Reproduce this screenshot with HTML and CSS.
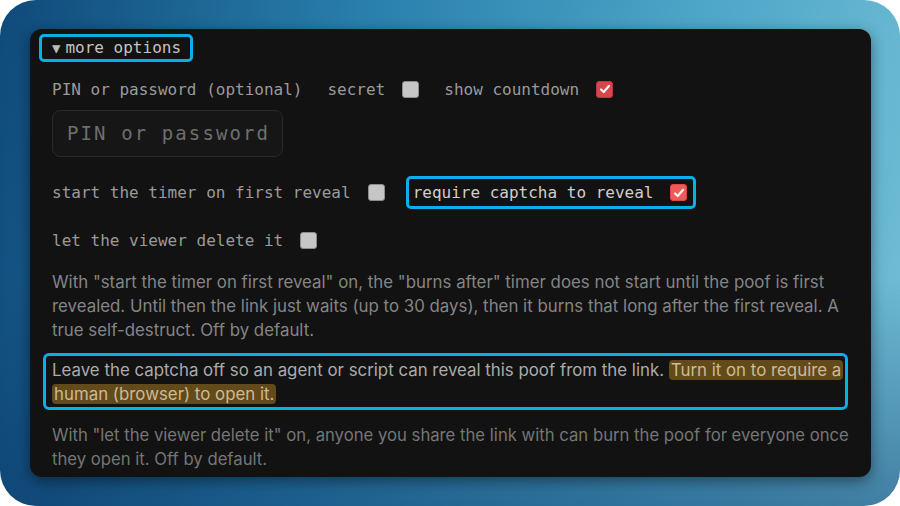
FILE: index.html
```html
<!DOCTYPE html>
<html lang="en">
<head>
  <meta charset="UTF-8">
  <title>more options</title>
  <link rel="stylesheet" href="styles.css">
</head>
<body>
<div class="frame">
  <div class="panel">
    <div class="summary mark-box"><span class="caret">&#9660;</span>more options</div>

    <div class="row first">
      <span class="label">PIN or password (optional)</span>
      <span class="group">
        <span class="label">secret</span>
        <span class="check"></span>
      </span>
      <span class="group">
        <span class="label">show countdown</span>
        <span class="check on"><svg viewBox="0 0 16 16"><path d="M3.5 8.5l3 3 6-7" /></svg></span>
      </span>
    </div>

    <div class="pin">PIN or password</div>

    <div class="row tall">
      <span class="group">
        <span class="label">start the timer on first reveal</span>
        <span class="check"></span>
      </span>
      <span class="group mark-box captcha">
        <span class="label bright">require captcha to reveal</span>
        <span class="check on hot"><svg viewBox="0 0 16 16"><path d="M3.5 8.5l3 3 6-7" /></svg></span>
      </span>
    </div>

    <div class="row">
      <span class="group">
        <span class="label">let the viewer delete it</span>
        <span class="check"></span>
      </span>
    </div>

    <p class="note">With "start the timer on first reveal" on, the "burns after" timer does not start until the poof is first revealed. Until then the link just waits (up to 30 days), then it burns that long after the first reveal. A true self-destruct. Off by default.</p>

    <p class="note key mark-box">Leave the captcha off so an agent or script can reveal this poof from the link. <span class="marker">Turn it on to require a human (browser) to open it.</span></p>

    <p class="note dim">With "let the viewer delete it" on, anyone you share the link with can burn the poof for everyone once they open it. Off by default.</p>
  </div>
</div>
</body>
</html>
```

FILE: styles.css
```css
body {
  margin: 0;
  background: #ffffff;
}
.frame {
  width: 900px;
  height: 506px;
  box-sizing: border-box;
  padding: 29px 29px 29px 30px;
  border-radius: 36px;
  background:
    linear-gradient(to bottom, rgba(8, 50, 100, 0) 55%, rgba(8, 50, 100, 0.45) 100%),
    linear-gradient(100deg, #0f4a7a 0%, #2a80ad 38%, #4ea6c8 72%, #72bed6 100%);
}
.panel {
  height: 100%;
  box-sizing: border-box;
  background: #121212;
  border-radius: 12px;
  padding: 5px 20px 0 22px;
  box-shadow: 0 4px 14px rgba(0, 0, 0, 0.45);
  font-family: "DejaVu Sans Mono", monospace;
  font-size: 16px;
  color: #9a9a9a;
}
.mark-box {
  border: 3px solid #0aaee8;
  border-radius: 5px;
}
.summary {
  display: inline-flex;
  align-items: center;
  height: 22px;
  line-height: 22px;
  padding: 0 9px 0 10px;
  margin-left: -13px;
  color: #c4c4c4;
}
.caret {
  font-size: 14px;
  margin-right: 5px;
  color: #bbbbbb;
}
.row {
  display: flex;
  align-items: center;
  height: 24px;
  margin-top: 19px;
  gap: 28px;
}
.row.first {
  margin-top: 15px;
  gap: 25px;
}
.row.tall {
  height: 33px;
  margin-top: 19px;
}
.group {
  display: flex;
  align-items: center;
  gap: 17px;
}
.label {
  white-space: pre;
}
.bright {
  color: #cfcfcf;
}
.captcha {
  height: 27px;
  padding: 0 6px 0 4px;
  margin-left: -7px;
}
.check {
  width: 17px;
  height: 17px;
  box-sizing: border-box;
  border-radius: 3px;
  background: #c6c6c6;
  border: 1px solid #8c8c8c;
  display: flex;
  align-items: center;
  justify-content: center;
}
.check.on {
  background: #d6464b;
  border-color: #b33a3e;
}
.check.hot {
  background: #f25a5a;
  border-color: #d84a4a;
}
.check svg {
  width: 14px;
  height: 14px;
  fill: none;
  stroke: #f2f2f2;
  stroke-width: 2.6;
  stroke-linecap: round;
  stroke-linejoin: round;
}
.pin {
  width: 231px;
  height: 47px;
  box-sizing: border-box;
  margin-top: 9px;
  border: 1px solid #2a2a2a;
  border-radius: 8px;
  background: #161616;
  padding-left: 14px;
  line-height: 45px;
  font-size: 19px;
  letter-spacing: 2.1px;
  color: #6e6e6e;
}
.note {
  margin: 18px 0 0 0;
  font-family: Inter, "Noto Sans", sans-serif;
  font-size: 16.85px;
  line-height: 24px;
  color: #858585;
}
.note.key {
  margin: 11px 3px 0 -9px;
  padding: 2px 2px 1px 6px;
  border-radius: 6px;
  color: #ababab;
}
.note.dim {
  margin: 13px -4px 0 0;
  font-size: 16.7px;
  color: #767676;
}
.marker {
  background: #634a1b;
  color: #cdbb95;
  padding: 0 2px;
  border-radius: 4px;
  -webkit-box-decoration-break: clone;
  box-decoration-break: clone;
}
```
